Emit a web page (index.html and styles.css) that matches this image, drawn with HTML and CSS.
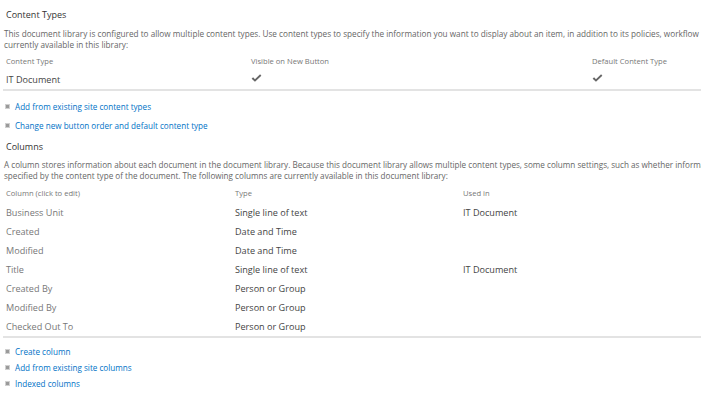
FILE: index.html
```html
<!DOCTYPE html>
<html lang="en">
<head>
    <meta charset="UTF-8">
    <title>Document Library Settings</title>
    <link rel="stylesheet" href="styles.css">
</head>
<body>
    <div class="page">
        <!-- Content types -->
        <div class="section">
            <h2 class="section-title">Content Types</h2>
            <p class="section-desc">This document library is configured to allow multiple content types. Use content types to specify the information you want to display about an item, in addition to its policies, workflow<br>currently available in this library:</p>

            <div class="grid ct-grid">
                <div class="cell head">Content Type</div>
                <div class="cell head">Visible on New Button</div>
                <div class="cell head">Default Content Type</div>

                <div class="cell name">IT Document</div>
                <div class="cell"><svg class="check" viewBox="0 0 12 10"><path d="M0.6 5.2 L2.2 3.7 L4.3 5.7 L10 0.4 L11.4 1.9 L4.3 8.6 Z"/></svg></div>
                <div class="cell"><svg class="check" viewBox="0 0 12 10"><path d="M0.6 5.2 L2.2 3.7 L4.3 5.7 L10 0.4 L11.4 1.9 L4.3 8.6 Z"/></svg></div>
            </div>

            <ul class="links">
                <li><a href="#">Add from existing site content types</a></li>
                <li><a href="#">Change new button order and default content type</a></li>
            </ul>
        </div>

        <!-- Columns -->
        <div class="section columns">
            <h2 class="section-title">Columns</h2>
            <p class="section-desc">A column stores information about each document in the document library. Because this document library allows multiple content types, some column settings, such as whether informa<br>specified by the content type of the document. The following columns are currently available in this document library:</p>

            <div class="grid col-grid">
                <div class="cell head">Column (click to edit)</div>
                <div class="cell head">Type</div>
                <div class="cell head">Used in</div>

                <div class="cell col-name">Business Unit</div>
                <div class="cell">Single line of text</div>
                <div class="cell">IT Document</div>

                <div class="cell col-name">Created</div>
                <div class="cell">Date and Time</div>
                <div class="cell"></div>

                <div class="cell col-name">Modified</div>
                <div class="cell">Date and Time</div>
                <div class="cell"></div>

                <div class="cell col-name">Title</div>
                <div class="cell">Single line of text</div>
                <div class="cell">IT Document</div>

                <div class="cell col-name">Created By</div>
                <div class="cell">Person or Group</div>
                <div class="cell"></div>

                <div class="cell col-name">Modified By</div>
                <div class="cell">Person or Group</div>
                <div class="cell"></div>

                <div class="cell col-name">Checked Out To</div>
                <div class="cell">Person or Group</div>
                <div class="cell"></div>
            </div>

            <ul class="links tight">
                <li><a href="#">Create column</a></li>
                <li><a href="#">Add from existing site columns</a></li>
                <li><a href="#">Indexed columns</a></li>
            </ul>
        </div>
    </div>
</body>
</html>
```

FILE: styles.css
```css
body {
    margin: 0;
    font-family: 'Open Sans', 'Noto Sans', sans-serif;
    background: #fff;
    color: #444;
    overflow: hidden;
}

.page {
    width: 780px;
    padding: 8px 0 0 3px;
}

.section-title {
    margin: 0 0 6px 3px;
    font-size: 9px;
    font-weight: 400;
    line-height: 14px;
    color: #333;
}

.columns .section-title {
    margin-bottom: 5px;
}

.section-desc {
    margin: 0 0 2px 1px;
    font-size: 8.2px;
    line-height: 11px;
    color: #666;
    white-space: nowrap;
}

.columns .section-desc {
    margin-bottom: 3px;
    font-size: 8.15px;
}

.grid {
    display: grid;
    border-bottom: 2px solid #e3e3e3;
}

.ct-grid {
    grid-template-columns: 245px 341px 1fr;
    grid-template-rows: 18px 19px;
}

.col-grid {
    grid-template-columns: 229px 228px 1fr;
    grid-auto-rows: 19px;
}

.cell {
    padding-left: 3px;
    font-size: 9.1px;
    line-height: 19px;
    color: #444;
}

.cell.head {
    font-size: 7.6px;
    line-height: 18px;
    color: #777;
}

.col-grid .cell.head {
    line-height: 19px;
}

.cell.col-name {
    color: #777;
}

.check {
    width: 11px;
    height: 9px;
    margin-top: 4px;
    fill: #666;
}

.links {
    list-style: none;
    margin: 6px 0 5px 0;
    padding: 0;
}

.links li {
    position: relative;
    padding-left: 12px;
    font-size: 8.15px;
    line-height: 19px;
}

.links.tight {
    margin-top: 6px;
}

.links.tight li {
    line-height: 16px;
}

.links li::before {
    content: '';
    position: absolute;
    left: 2px;
    top: 50%;
    width: 3px;
    height: 3px;
    margin-top: -3px;
    background: #9a9a9a;
    border: 1px solid #d0d0d0;
}

.links a {
    color: #0072c6;
    text-decoration: none;
}
```
